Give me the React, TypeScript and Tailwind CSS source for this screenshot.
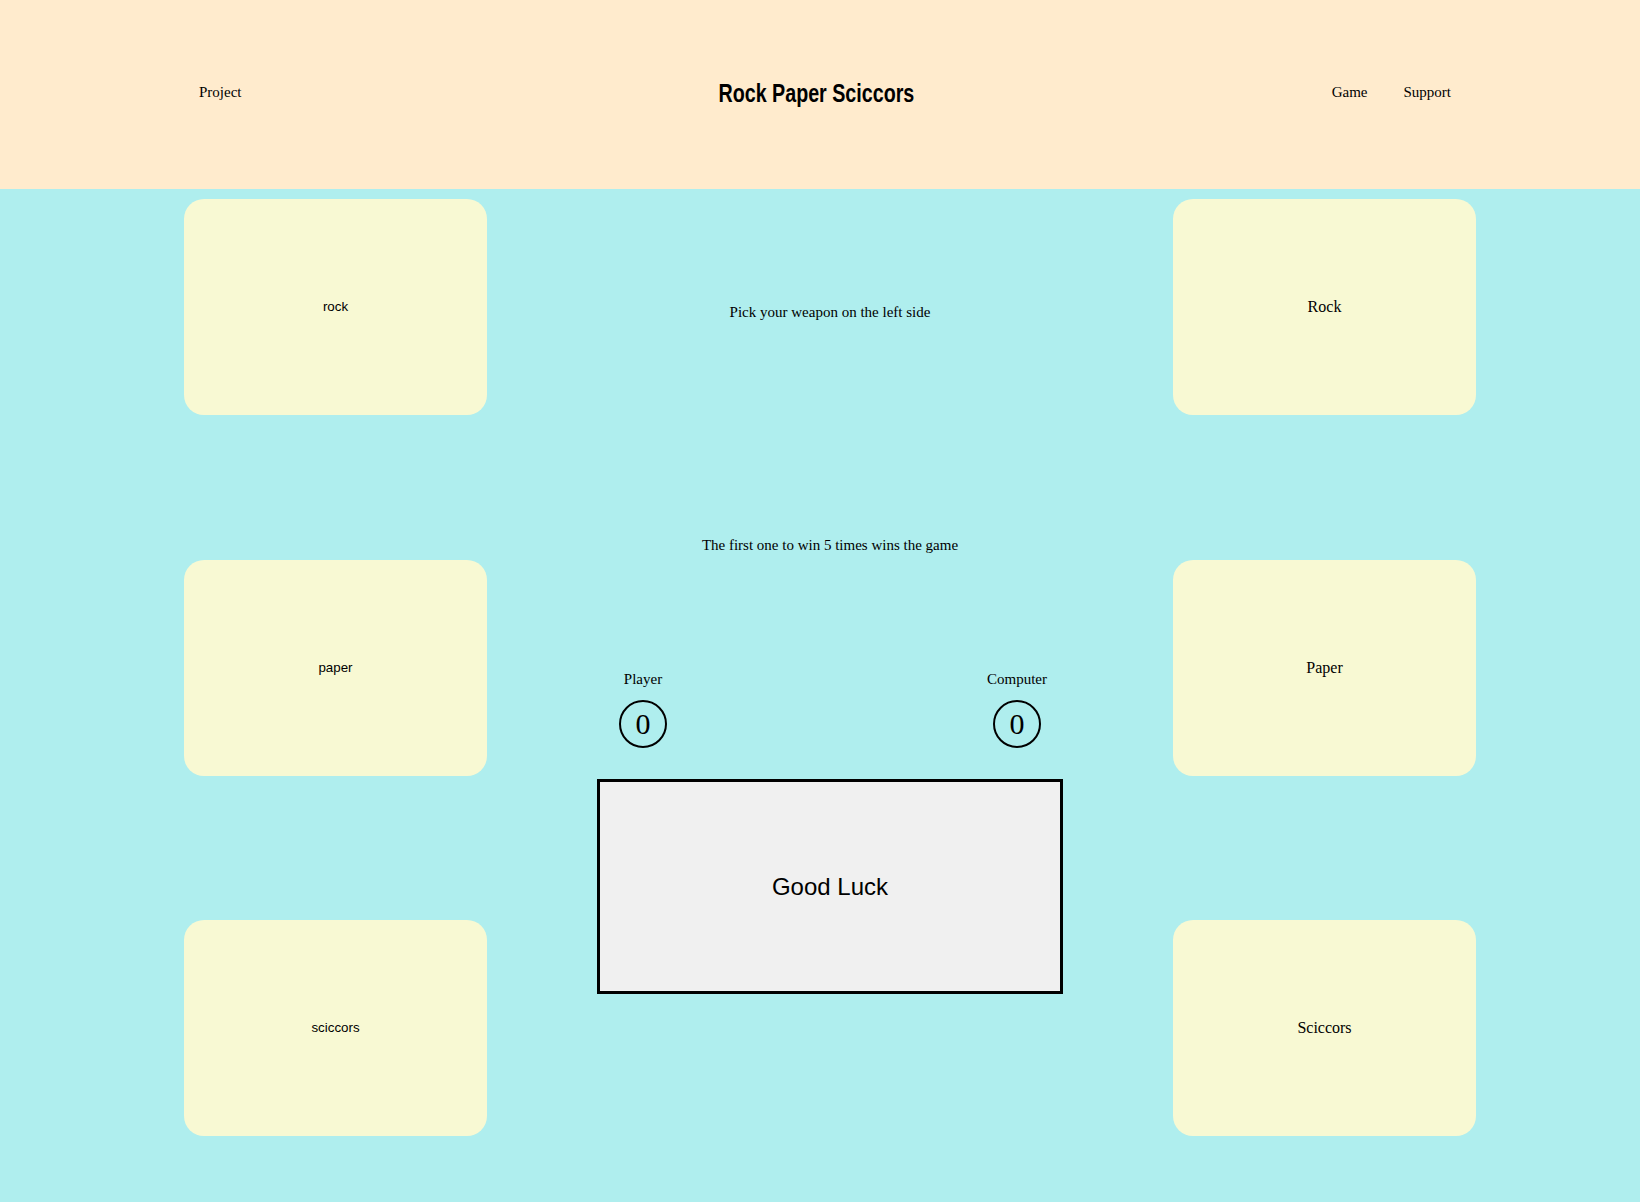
const serif = "font-['Liberation_Serif','Times_New_Roman',serif]";

function WeaponButton({ label }: { label: string }) {
    return (
        <button
            type="button"
            className="w-[303px] h-[216px] rounded-[20px] bg-[#f8f9d3] flex items-center justify-center text-[13.333px] text-black font-['Liberation_Sans',Arial,sans-serif]"
        >
            {label}
        </button>
    );
}

function ComputerCard({ label }: { label: string }) {
    return (
        <div className={`w-[303px] h-[216px] rounded-[20px] bg-[#f8f9d3] flex items-center justify-center text-[16px] text-black ${serif}`}>
            {label}
        </div>
    );
}

function Score({ label, value }: { label: string; value: number }) {
    return (
        <div className="w-[92px] flex flex-col items-center">
            <span className="text-[15px] leading-[17px]">{label}</span>
            <div className="mt-[11.5px] w-[48px] h-[48px] rounded-full border-2 border-black flex items-center justify-center text-[30px] leading-none">
                {value}
            </div>
        </div>
    );
}

export default function App() {
    return (
        <div className={`min-h-[1202px] bg-[#afeeee] text-black ${serif}`}>
            <header className="h-[189px] bg-[#ffebcd] flex items-center pl-[199px] pr-[189px] pb-[4px] text-[15px]">
                <div className="flex-1">
                    <a href="#">Project</a>
                </div>
                <h1 className="mr-[18px] text-[24px] font-bold font-['Liberation_Sans',Arial,sans-serif] scale-x-[0.82] scale-y-[1.1]">
                    Rock Paper Sciccors
                </h1>
                <nav className="flex-1 flex justify-end gap-[36px]">
                    <a href="#">Game</a>
                    <a href="#">Support</a>
                </nav>
            </header>

            <main className="grid grid-cols-[303px_1fr_303px] pl-[184px] pr-[164px] pt-[10px] pb-[65px]">
                <div className="flex flex-col gap-[144.5px]">
                    <WeaponButton label="rock" />
                    <WeaponButton label="paper" />
                    <WeaponButton label="sciccors" />
                </div>

                <div className="flex flex-col items-center text-[15px] leading-[17px]">
                    <p className="mt-[105px]">Pick your weapon on the left side</p>
                    <p className="mt-[216px]">The first one to win 5 times wins the game</p>
                    <div className="mt-[117px] w-[466px] flex justify-between">
                        <Score label="Player" value={0} />
                        <Score label="Computer" value={0} />
                    </div>
                    <div className="mt-[31px] w-[466px] h-[215px] border-[3px] border-black bg-[#f0f0f0] flex items-center justify-center text-[24px] font-['Liberation_Sans',Arial,sans-serif]">
                        Good Luck
                    </div>
                </div>

                <div className="flex flex-col gap-[144.5px]">
                    <ComputerCard label="Rock" />
                    <ComputerCard label="Paper" />
                    <ComputerCard label="Sciccors" />
                </div>
            </main>
        </div>
    );
}
